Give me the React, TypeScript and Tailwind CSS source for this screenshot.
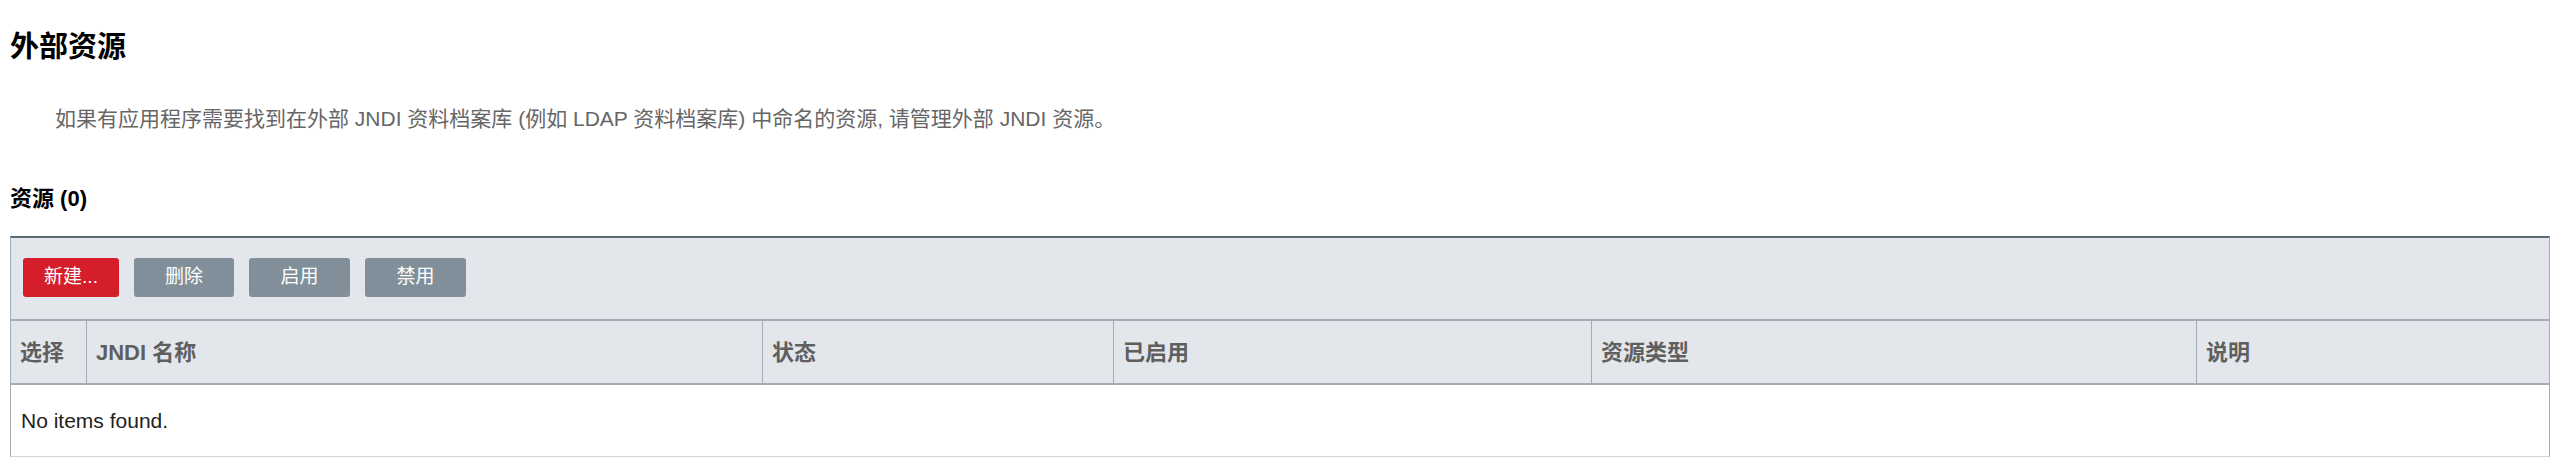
import React from 'react';

const columns = [
  { label: '选择', width: 'w-[75px]' },
  { label: 'JNDI 名称', width: 'w-[676px]' },
  { label: '状态', width: 'w-[351px]' },
  { label: '已启用', width: 'w-[478px]' },
  { label: '资源类型', width: 'w-[605px]' },
  { label: '说明', width: 'flex-1' },
];

const ExternalResources: React.FC = () => {
  return (
    <div className="min-h-[465px] bg-white px-[10px] pt-[29px] font-['Liberation_Sans','Noto_Sans_CJK_SC',sans-serif]">
      <h1 className="text-[29px] font-bold leading-[36px] text-black">外部资源</h1>
      <p className="mt-[42px] pl-[45px] text-[21px] leading-[24px] text-[#666]">
        如果有应用程序需要找到在外部 JNDI 资料档案库 (例如 LDAP 资料档案库) 中命名的资源, 请管理外部 JNDI 资源。
      </p>
      <h2 className="mt-[56px] text-[22px] font-bold leading-[24px] text-black">资源 (0)</h2>

      <div className="mt-[25px] border-t-2 border-t-[#5c6b78] border-x border-x-[#a3adb5] border-b border-b-[#d0d4d8]">
        <div className="flex gap-[15px] bg-[#e3e7eb] px-[12px] pt-[20px] pb-[22px]">
          <button className="h-[39px] w-[96px] rounded-[3px] bg-[#d41f2b] text-[19px] text-white">新建...</button>
          <button className="h-[39px] w-[100px] rounded-[3px] bg-[#808f99] text-[19px] text-white">删除</button>
          <button className="h-[39px] w-[101px] rounded-[3px] bg-[#808f99] text-[19px] text-white">启用</button>
          <button className="h-[39px] w-[101px] rounded-[3px] bg-[#808f99] text-[19px] text-white">禁用</button>
        </div>
        <div className="flex h-[66px] border-y-2 border-[#a3adb5] bg-[#e3e7eb]">
          {columns.map((col, i) => (
            <div
              key={col.label}
              className={`${col.width} flex items-center px-[9px] text-[22px] font-bold text-[#5f5f5f] ${i > 0 ? 'border-l border-[#a3adb5]' : ''}`}
            >
              {col.label}
            </div>
          ))}
        </div>
        <div className="flex h-[71px] items-center px-[10px] text-[21px] text-[#222]">No items found.</div>
      </div>
    </div>
  );
};

export default ExternalResources;
